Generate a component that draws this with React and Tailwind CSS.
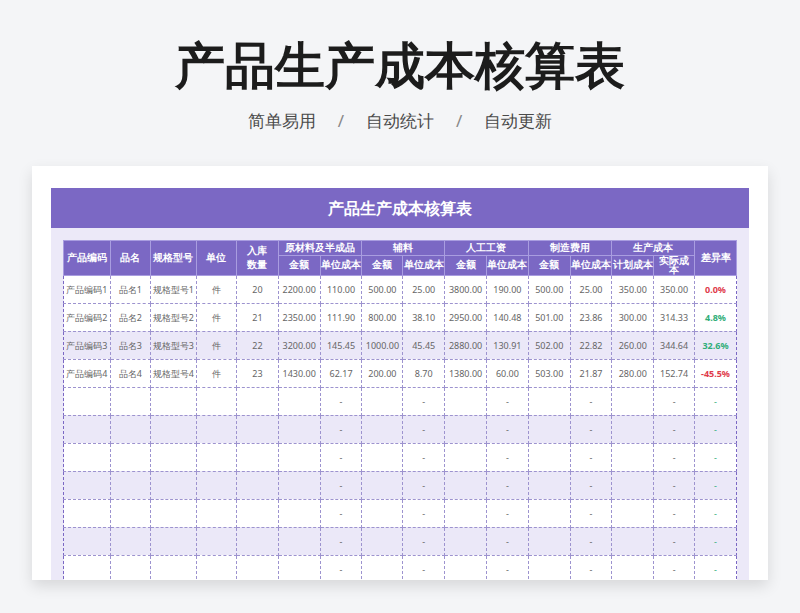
const cols = [47, 41, 46, 41, 42, 42, 42, 41, 42, 42, 42, 42, 42, 42, 41, 42];

const data = [
  ["产品编码1", "品名1", "规格型号1", "件", "20", "2200.00", "110.00", "500.00", "25.00", "3800.00", "190.00", "500.00", "25.00", "350.00", "350.00", "0.0%"],
  ["产品编码2", "品名2", "规格型号2", "件", "21", "2350.00", "111.90", "800.00", "38.10", "2950.00", "140.48", "501.00", "23.86", "300.00", "314.33", "4.8%"],
  ["产品编码3", "品名3", "规格型号3", "件", "22", "3200.00", "145.45", "1000.00", "45.45", "2880.00", "130.91", "502.00", "22.82", "260.00", "344.64", "32.6%"],
  ["产品编码4", "品名4", "规格型号4", "件", "23", "1430.00", "62.17", "200.00", "8.70", "1380.00", "60.00", "503.00", "21.87", "280.00", "152.74", "-45.5%"],
];

const rateColor = (v) =>
  v === "0.0%" || v.startsWith("-") ? "text-[#e03b4b]" : "text-[#2fae78]";

const th = "border border-[#a99de0] font-semibold text-white text-[9.5px]";

export default function App() {
  const rows = [...data];
  for (let i = 0; i < 7; i++) rows.push(null);
  return (
    <div className="h-[613px] w-[800px] overflow-hidden bg-[#f4f5f7] font-['Noto_Sans_CJK_SC','Noto_Sans',sans-serif]">
      <div className="pt-[32px] text-center text-[50px] font-bold leading-[64px] text-[#1c1c1c]">
        产品生产成本核算表
      </div>
      <div className="mt-[12px] flex items-center justify-center gap-[22px] text-[17px] text-[#4a4a4a]">
        <span>简单易用</span>
        <span className="text-[#888]">/</span>
        <span>自动统计</span>
        <span className="text-[#888]">/</span>
        <span>自动更新</span>
      </div>
      <div className="mx-[32px] mt-[32px] h-[414px] overflow-hidden bg-white px-[19px] pt-[22px] shadow-[0_6px_14px_rgba(0,0,0,0.12)]">
        <div className="flex h-[40px] items-center justify-center bg-[#7b68c4] text-[16px] font-bold text-white">
          产品生产成本核算表
        </div>
        <div className="h-[400px] bg-[#ece9f8] px-[12px] pt-[12px]">
          <table className="table-fixed border-collapse text-center text-[9px] leading-none">
            <colgroup>
              {cols.map((w, i) => (
                <col key={i} style={{ width: w }} />
              ))}
            </colgroup>
            <thead className="bg-[#7b68c4]">
              <tr className="h-[15px]">
                <th rowSpan={2} className={th}>产品编码</th>
                <th rowSpan={2} className={th}>品名</th>
                <th rowSpan={2} className={th}>规格型号</th>
                <th rowSpan={2} className={th}>单位</th>
                <th rowSpan={2} className={th + " leading-[14px]"}>入库<br />数量</th>
                <th colSpan={2} className={th}>原材料及半成品</th>
                <th colSpan={2} className={th}>辅料</th>
                <th colSpan={2} className={th}>人工工资</th>
                <th colSpan={2} className={th}>制造费用</th>
                <th colSpan={2} className={th}>生产成本</th>
                <th rowSpan={2} className={th}>差异率</th>
              </tr>
              <tr className="h-[15px]">
                {["金额", "单位成本", "金额", "单位成本", "金额", "单位成本", "金额", "单位成本", "计划成本", "实际成本"].map((t, i) => (
                  <th key={i} className={th}>{t}</th>
                ))}
              </tr>
            </thead>
            <tbody>
              {rows.map((r, ri) => (
                <tr key={ri} className={`h-[28px] ${ri === 2 || (ri > 4 && ri % 2 === 1) ? "bg-[#ebe8f8]" : "bg-white"}`}>
                  {cols.map((_, ci) => {
                    const v = r ? r[ci] : [6, 8, 10, 12, 14, 15].includes(ci) ? "-" : "";
                    const cls =
                      ci === 15
                        ? r ? `font-bold ${rateColor(v)}` : "text-[#2fae78]"
                        : "text-[#666]";
                    return (
                      <td
                        key={ci}
                        className={`border border-dashed border-[#9d93cf] ${ci === 0 ? "border-l-[#7b68c4]" : ""} ${ci === 15 ? "border-r-[#7b68c4]" : ""} ${cls}`}
                      >
                        {v}
                      </td>
                    );
                  })}
                </tr>
              ))}
            </tbody>
          </table>
        </div>
      </div>
    </div>
  );
}
